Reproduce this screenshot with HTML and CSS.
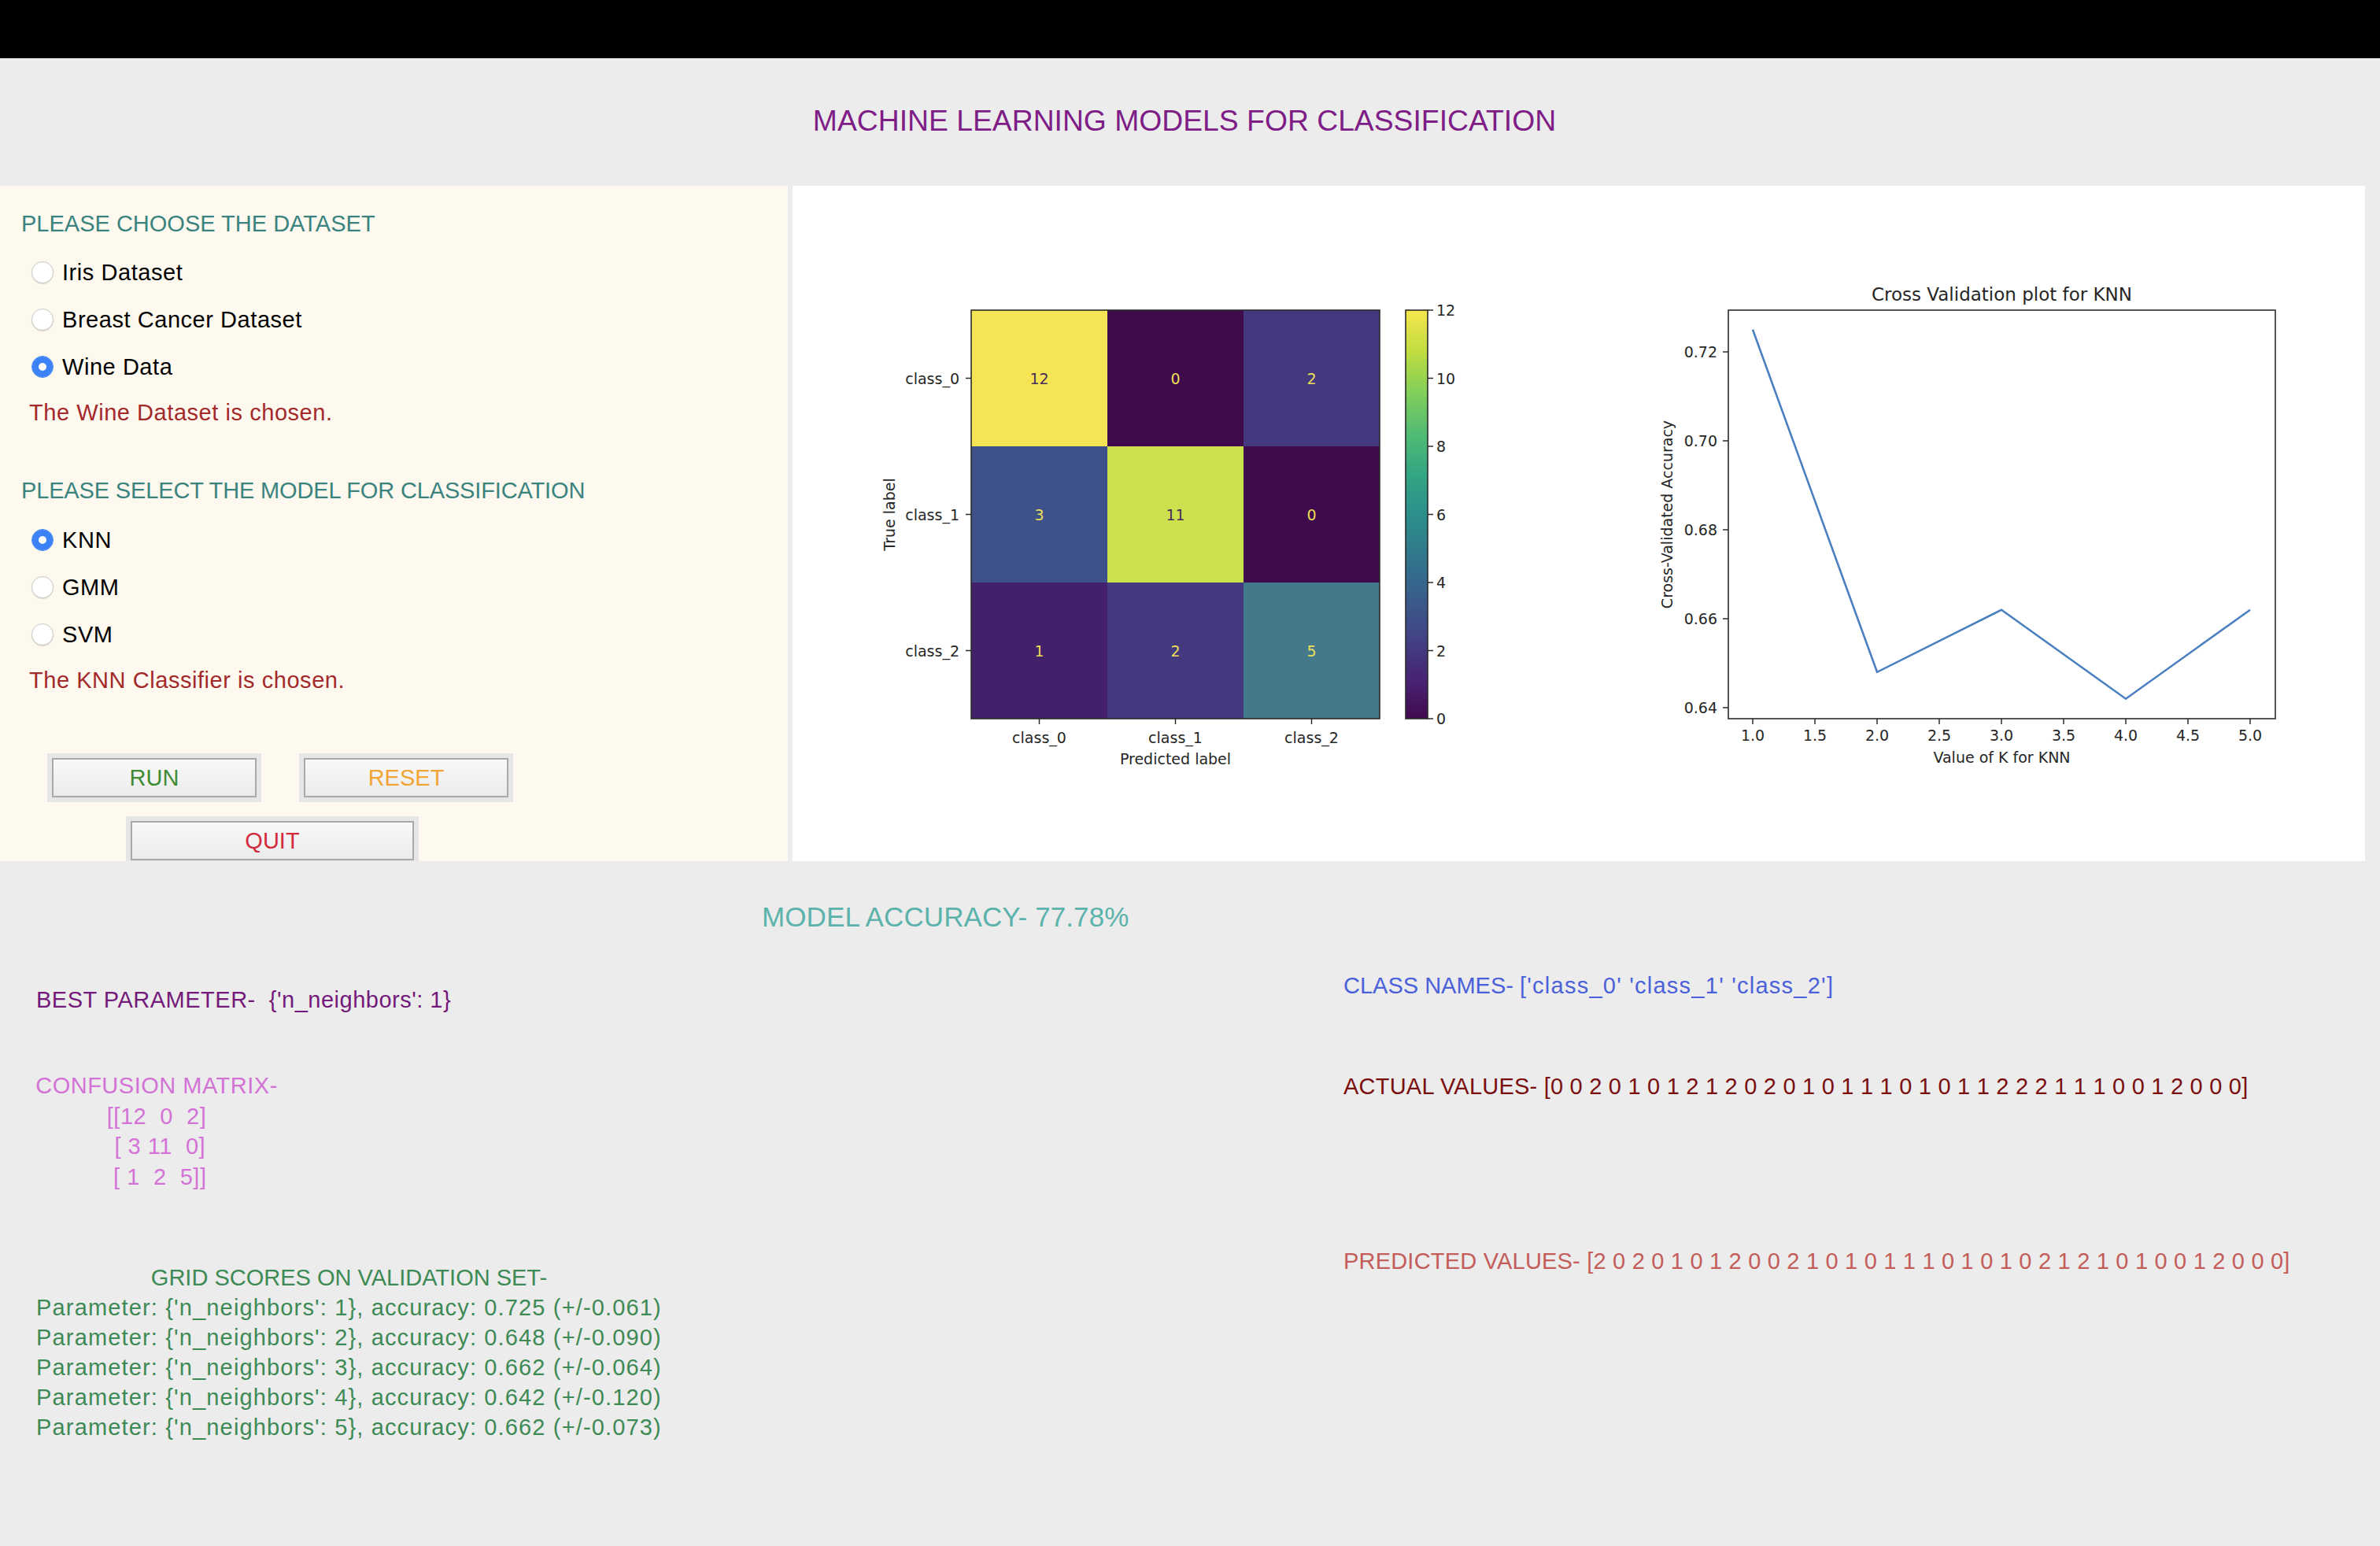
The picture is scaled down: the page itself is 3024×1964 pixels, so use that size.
FILE: index.html
```html
<!DOCTYPE html>
<html lang="en">
<head>
<meta charset="utf-8">
<title>Machine Learning Models for Classification</title>
<link rel="stylesheet" href="styles.css">
</head>
<body>
<div class="topbar"></div>
<header class="app-header">
  <h1 class="app-title">MACHINE LEARNING MODELS FOR CLASSIFICATION</h1>
</header>

<main class="workspace">
  <section class="controls">
    <h2 class="section-label">PLEASE CHOOSE THE DATASET</h2>
    <div class="radio-list">
      <label class="radio-row"><input class="radio" type="radio" name="dataset"><span>Iris Dataset</span></label>
      <label class="radio-row"><input class="radio" type="radio" name="dataset"><span>Breast Cancer Dataset</span></label>
      <label class="radio-row"><input class="radio" type="radio" name="dataset" checked><span>Wine Data</span></label>
    </div>
    <p class="status">The Wine Dataset is chosen.</p>

    <h2 class="section-label section-label--model">PLEASE SELECT THE MODEL FOR CLASSIFICATION</h2>
    <div class="radio-list radio-list--model">
      <label class="radio-row"><input class="radio" type="radio" name="model" checked><span>KNN</span></label>
      <label class="radio-row"><input class="radio" type="radio" name="model"><span>GMM</span></label>
      <label class="radio-row"><input class="radio" type="radio" name="model"><span>SVM</span></label>
    </div>
    <p class="status">The KNN Classifier is chosen.</p>

    <div class="actions">
      <div class="btn-row">
        <div class="btn-frame"><button class="btn btn--run">RUN</button></div>
        <div class="btn-frame"><button class="btn btn--reset">RESET</button></div>
      </div>
      <div class="btn-row btn-row--quit">
        <div class="btn-frame"><button class="btn btn--quit">QUIT</button></div>
      </div>
    </div>
  </section>

  <section class="plots">
    <svg class="plots-canvas" viewBox="0 0 1998 858" width="1998" height="858">
      <defs>
        <linearGradient id="viridis" x1="0" y1="1" x2="0" y2="0">
          <stop offset="0" stop-color="#430a4f"/>
          <stop offset="0.1" stop-color="#472475"/>
          <stop offset="0.2" stop-color="#424385"/>
          <stop offset="0.3" stop-color="#395e8b"/>
          <stop offset="0.4" stop-color="#31778c"/>
          <stop offset="0.5" stop-color="#2c8f8a"/>
          <stop offset="0.6" stop-color="#33a683"/>
          <stop offset="0.7" stop-color="#52bc72"/>
          <stop offset="0.8" stop-color="#83cf58"/>
          <stop offset="0.9" stop-color="#c1dd3f"/>
          <stop offset="1" stop-color="#f6e64f"/>
        </linearGradient>
      </defs>

      <!-- confusion matrix heatmap -->
      <g class="heatmap">
        <rect x="227" y="158" width="173" height="173" fill="#f5e555"/>
        <rect x="400" y="158" width="173" height="173" fill="#400b4d"/>
        <rect x="573" y="158" width="173" height="173" fill="#44397e"/>
        <rect x="227" y="331" width="173" height="173" fill="#3e5189"/>
        <rect x="400" y="331" width="173" height="173" fill="#cde04d"/>
        <rect x="573" y="331" width="173" height="173" fill="#400b4d"/>
        <rect x="227" y="504" width="173" height="173" fill="#42206a"/>
        <rect x="400" y="504" width="173" height="173" fill="#44397e"/>
        <rect x="573" y="504" width="173" height="173" fill="#43798b"/>
      </g>
      <g class="cell-text">
        <text class="cell-dark" x="313.5" y="244.5">12</text>
        <text x="486.5" y="244.5">0</text>
        <text x="659.5" y="244.5">2</text>
        <text x="313.5" y="417.5">3</text>
        <text class="cell-dark" x="486.5" y="417.5">11</text>
        <text x="659.5" y="417.5">0</text>
        <text x="313.5" y="590.5">1</text>
        <text x="486.5" y="590.5">2</text>
        <text x="659.5" y="590.5">5</text>
      </g>
      <rect class="spine" x="227" y="158" width="519" height="519"/>
      <g class="ticks">
        <line x1="220" y1="244.5" x2="227" y2="244.5"/>
        <line x1="220" y1="417.5" x2="227" y2="417.5"/>
        <line x1="220" y1="590.5" x2="227" y2="590.5"/>
        <line x1="313.5" y1="677" x2="313.5" y2="684"/>
        <line x1="486.5" y1="677" x2="486.5" y2="684"/>
        <line x1="659.5" y1="677" x2="659.5" y2="684"/>
      </g>
      <g class="tick-label tick-label--y">
        <text x="212" y="244.5">class_0</text>
        <text x="212" y="417.5">class_1</text>
        <text x="212" y="590.5">class_2</text>
      </g>
      <g class="tick-label tick-label--x">
        <text x="313.5" y="708">class_0</text>
        <text x="486.5" y="708">class_1</text>
        <text x="659.5" y="708">class_2</text>
      </g>
      <text class="axis-label" x="486.5" y="735">Predicted label</text>
      <text class="axis-label axis-label--rot" transform="translate(123 417.5) rotate(-90)">True label</text>

      <!-- colour bar -->
      <rect x="779" y="158" width="28" height="519" fill="url(#viridis)"/>
      <rect class="spine" x="779" y="158" width="28" height="519"/>
      <g class="ticks">
        <line x1="807" y1="677" x2="814" y2="677"/>
        <line x1="807" y1="590.5" x2="814" y2="590.5"/>
        <line x1="807" y1="504" x2="814" y2="504"/>
        <line x1="807" y1="417.5" x2="814" y2="417.5"/>
        <line x1="807" y1="331" x2="814" y2="331"/>
        <line x1="807" y1="244.5" x2="814" y2="244.5"/>
        <line x1="807" y1="158" x2="814" y2="158"/>
      </g>
      <g class="tick-label tick-label--cb">
        <text x="818" y="677">0</text>
        <text x="818" y="590.5">2</text>
        <text x="818" y="504">4</text>
        <text x="818" y="417.5">6</text>
        <text x="818" y="331">8</text>
        <text x="818" y="244.5">10</text>
        <text x="818" y="158">12</text>
      </g>

      <!-- cross validation plot -->
      <text class="plot-title" x="1536.5" y="146">Cross Validation plot for KNN</text>
      <polyline class="cv-line" points="1220,182.8 1378,617.8 1536,538.7 1694,651.7 1852,538.7"/>
      <rect class="spine" x="1189" y="158" width="695" height="519"/>
      <g class="ticks">
        <line x1="1182" y1="663" x2="1189" y2="663"/>
        <line x1="1182" y1="550" x2="1189" y2="550"/>
        <line x1="1182" y1="437" x2="1189" y2="437"/>
        <line x1="1182" y1="324" x2="1189" y2="324"/>
        <line x1="1182" y1="211" x2="1189" y2="211"/>
        <line x1="1220" y1="677" x2="1220" y2="684"/>
        <line x1="1299" y1="677" x2="1299" y2="684"/>
        <line x1="1378" y1="677" x2="1378" y2="684"/>
        <line x1="1457" y1="677" x2="1457" y2="684"/>
        <line x1="1536" y1="677" x2="1536" y2="684"/>
        <line x1="1615" y1="677" x2="1615" y2="684"/>
        <line x1="1694" y1="677" x2="1694" y2="684"/>
        <line x1="1773" y1="677" x2="1773" y2="684"/>
        <line x1="1852" y1="677" x2="1852" y2="684"/>
      </g>
      <g class="tick-label tick-label--y">
        <text x="1175" y="663">0.64</text>
        <text x="1175" y="550">0.66</text>
        <text x="1175" y="437">0.68</text>
        <text x="1175" y="324">0.70</text>
        <text x="1175" y="211">0.72</text>
      </g>
      <g class="tick-label tick-label--x">
        <text x="1220" y="705">1.0</text>
        <text x="1299" y="705">1.5</text>
        <text x="1378" y="705">2.0</text>
        <text x="1457" y="705">2.5</text>
        <text x="1536" y="705">3.0</text>
        <text x="1615" y="705">3.5</text>
        <text x="1694" y="705">4.0</text>
        <text x="1773" y="705">4.5</text>
        <text x="1852" y="705">5.0</text>
      </g>
      <text class="axis-label" x="1536.5" y="733">Value of K for KNN</text>
      <text class="axis-label axis-label--rot" transform="translate(1111 417.5) rotate(-90)">Cross-Validated Accuracy</text>
    </svg>
  </section>
</main>

<section class="results">
  <p class="accuracy">MODEL ACCURACY- 77.78%</p>
  <div class="results-cols">
    <div class="results-left">
      <p class="best">BEST PARAMETER-  {'n_neighbors': 1}</p>
      <p class="confusion">CONFUSION MATRIX-
[[12  0  2]
 [ 3 11  0]
 [ 1  2  5]]</p>
      <p class="grid-scores"><span class="grid-scores__title">GRID SCORES ON VALIDATION SET-</span>
Parameter: {'n_neighbors': 1}, accuracy: 0.725 (+/-0.061)
Parameter: {'n_neighbors': 2}, accuracy: 0.648 (+/-0.090)
Parameter: {'n_neighbors': 3}, accuracy: 0.662 (+/-0.064)
Parameter: {'n_neighbors': 4}, accuracy: 0.642 (+/-0.120)
Parameter: {'n_neighbors': 5}, accuracy: 0.662 (+/-0.073)</p>
    </div>
    <div class="results-right">
      <p class="class-names">CLASS NAMES- <span class="loose">['class_0' 'class_1' 'class_2']</span></p>
      <p class="actual">ACTUAL VALUES- [0 0 2 0 1 0 1 2 1 2 0 2 0 1 0 1 1 1 0 1 0 1 1 2 2 2 1 1 1 0 0 1 2 0 0 0]</p>
      <p class="predicted">PREDICTED VALUES- [2 0 2 0 1 0 1 2 0 0 2 1 0 1 0 1 1 1 0 1 0 1 0 2 1 2 1 0 1 0 0 1 2 0 0 0]</p>
    </div>
  </div>
</section>
</body>
</html>
```

FILE: styles.css
```css
* { box-sizing: border-box; }

html, body { margin: 0; padding: 0; }

body {
  width: 3024px;
  min-height: 1964px;
  background: #ececec;
  font-family: "Liberation Sans", Arial, sans-serif;
  font-size: 29px;
}

p { margin: 0; }

.topbar {
  height: 74px;
  background: #000;
}

.app-header {
  height: 162px;
  padding-top: 56px;
  padding-right: 14px;
  text-align: center;
}

.app-title {
  margin: 0;
  font-size: 37.3px;
  line-height: 46px;
  font-weight: normal;
  color: #7f1d87;
}

/* ---------- workspace ---------- */
.workspace {
  display: flex;
  gap: 6px;
  height: 858px;
}

.controls {
  width: 1001px;
  flex: none;
  background: #fdf9ef;
  padding: 30px 0 0 27px;
  overflow: hidden;
}

.plots {
  width: 1998px;
  flex: none;
  background: #fff;
}

.section-label {
  margin: 0;
  font-size: 29px;
  line-height: 36px;
  font-weight: normal;
  color: #3a837e;
}

.section-label--model {
  margin-top: 63px;
  letter-spacing: -0.15px;
}

.radio-list {
  display: flex;
  flex-direction: column;
  gap: 24px;
  margin-top: 26px;
  padding-left: 13px;
}

.radio-list--model { margin-top: 27px; }

.radio-row {
  display: flex;
  align-items: center;
  gap: 11px;
  height: 36px;
  font-size: 29px;
  letter-spacing: 0.55px;
  color: #000;
}

.radio {
  appearance: none;
  -webkit-appearance: none;
  margin: 0;
  width: 28px;
  height: 28px;
  flex: none;
  border-radius: 50%;
  border: 1px solid #cacaca;
  background: #fff;
  box-shadow: 0 1px 1px rgba(0, 0, 0, 0.12);
}

.radio:checked {
  border-color: #3a7ff0;
  background: #fff;
  box-shadow: inset 0 0 0 8px #3b82f6;
}

.status {
  margin: 22px 0 0 10px;
  font-size: 29px;
  line-height: 36px;
  letter-spacing: 0.55px;
  color: #a3292b;
}

.actions { margin-top: 75px; }

.btn-row {
  display: flex;
  gap: 48px;
  margin-left: 33px;
}

.btn-row--quit {
  margin-left: 133px;
  margin-top: 18px;
}

.btn-frame {
  padding: 6px;
  background: #e6e6e6;
}

.btn {
  display: block;
  width: 260px;
  height: 50px;
  padding: 0;
  border: 2px solid #a9a9a9;
  background: linear-gradient(#f9f9f9, #ebebeb);
  font-family: "Liberation Sans", Arial, sans-serif;
  font-size: 29px;
  line-height: 46px;
  text-align: center;
}

.btn--run { color: #3f8b34; }
.btn--reset { color: #f0a535; }
.btn--quit { color: #d42a3d; width: 360px; }

/* ---------- plots ---------- */
.plots-canvas {
  display: block;
  font-family: "DejaVu Sans", sans-serif;
}

.spine {
  fill: none;
  stroke: #2b2b2b;
  stroke-width: 1.6;
}

.ticks line {
  stroke: #2b2b2b;
  stroke-width: 1.5;
}

.cell-text text {
  font-size: 19px;
  fill: #ecdf57;
  text-anchor: middle;
  dominant-baseline: central;
}

.cell-text .cell-dark { fill: #4a2c5a; }

.tick-label text {
  font-size: 19px;
  fill: #262626;
}

.tick-label--y text {
  text-anchor: end;
  dominant-baseline: central;
}

.tick-label--x text { text-anchor: middle; }

.tick-label--cb text {
  text-anchor: start;
  dominant-baseline: central;
}

.axis-label {
  font-size: 19px;
  fill: #262626;
  text-anchor: middle;
}

.axis-label--rot { dominant-baseline: central; }

.plot-title {
  font-size: 23px;
  fill: #262626;
  text-anchor: middle;
}

.cv-line {
  fill: none;
  stroke: #4a80bf;
  stroke-width: 2.6;
  stroke-linejoin: miter;
}

/* ---------- results ---------- */
.results { padding-top: 50px; }

.accuracy {
  margin-left: 968px;
  font-size: 35px;
  line-height: 42px;
  letter-spacing: 0.1px;
  color: #5bb3ab;
}

.results-cols { display: flex; }

.results-left {
  width: 1707px;
  flex: none;
  padding-top: 65px;
}

.results-right { padding-top: 47px; }

.best,
.confusion,
.grid-scores,
.class-names,
.actual,
.predicted {
  font-size: 29px;
  line-height: 38px;
  white-space: pre;
}

.best {
  margin-left: 46px;
  letter-spacing: 0.5px;
  color: #741a7a;
}

.confusion {
  width: 398px;
  margin-top: 71px;
  line-height: 38.5px;
  letter-spacing: 0.5px;
  text-align: center;
  color: #d373d6;
}

.grid-scores {
  width: 887px;
  margin-top: 90px;
  text-align: center;
  letter-spacing: 1.15px;
  color: #3d8a55;
}

.grid-scores__title { letter-spacing: 0; }

.class-names { color: #4a61da; }

.class-names .loose { letter-spacing: 1.25px; }

.actual {
  margin-top: 90px;
  letter-spacing: 0.22px;
  color: #7a0f0f;
}

.predicted {
  margin-top: 184px;
  letter-spacing: 0.2px;
  color: #c45d5a;
}
```
